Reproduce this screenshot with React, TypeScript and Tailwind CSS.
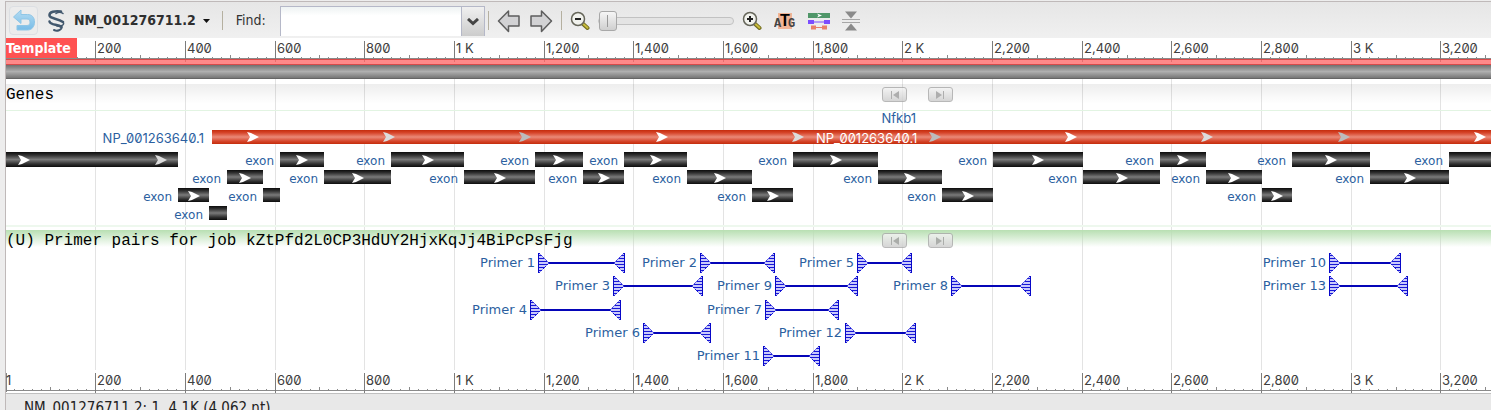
import React from "react";

const ORIGIN = 6;
const SCALE = 0.4484;
const toX = (base: number) => Math.floor(ORIGIN + base * SCALE);

const MAJORS = Array.from({ length: 16 }, (_, i) => (i + 1) * 200);
const TICKS = Array.from({ length: 203 }, (_, i) => (i + 1) * 20);

const EXON_ROWS = [
  { top: 43, height: 15 },
  { top: 61, height: 14 },
  { top: 79, height: 14 },
  { top: 97, height: 14 },
];

const EXONS = [
  { start: 0, end: 178, row: 0 },
  { start: 178, end: 209, row: 2 },
  { start: 209, end: 227, row: 3 },
  { start: 227, end: 263, row: 1 },
  { start: 263, end: 280, row: 2 },
  { start: 280, end: 324, row: 0 },
  { start: 324, end: 391, row: 1 },
  { start: 391, end: 464, row: 0 },
  { start: 464, end: 535, row: 1 },
  { start: 535, end: 583, row: 0 },
  { start: 583, end: 624, row: 1 },
  { start: 624, end: 687, row: 0 },
  { start: 687, end: 752, row: 1 },
  { start: 752, end: 793, row: 2 },
  { start: 793, end: 878, row: 0 },
  { start: 878, end: 942, row: 1 },
  { start: 942, end: 993, row: 2 },
  { start: 993, end: 1083, row: 0 },
  { start: 1083, end: 1160, row: 1 },
  { start: 1160, end: 1206, row: 0 },
  { start: 1206, end: 1262, row: 1 },
  { start: 1262, end: 1292, row: 2 },
  { start: 1292, end: 1370, row: 0 },
  { start: 1370, end: 1449, row: 1 },
  { start: 1449, end: 1828, row: 0 },
];

const PRIMERS = [
  { id: 1, start: 538, end: 625, row: 0 },
  { id: 2, start: 700, end: 775, row: 0 },
  { id: 5, start: 857, end: 912, row: 0 },
  { id: 10, start: 1329, end: 1401, row: 0 },
  { id: 3, start: 613, end: 703, row: 1 },
  { id: 9, start: 775, end: 858, row: 1 },
  { id: 8, start: 951, end: 1031, row: 1 },
  { id: 13, start: 1329, end: 1408, row: 1 },
  { id: 4, start: 530, end: 621, row: 2 },
  { id: 7, start: 765, end: 839, row: 2 },
  { id: 6, start: 643, end: 711, row: 3 },
  { id: 12, start: 845, end: 916, row: 3 },
  { id: 11, start: 763, end: 820, row: 4 },
];

const PRIMER_ROW_Y = [14, 37, 61, 84, 107];

const ARROW_FILLS = ["#ffffff", "#dcdcdc", "#bcbcbc"];

function rulerLabel(base: number) {
  return base % 1000 === 0 ? `${base / 1000} K` : base.toLocaleString("en-US");
}

function Ruler({ first, className }: { first?: boolean; className: string }) {
  return (
    <svg className={className} shapeRendering="crispEdges" role="img" aria-label="Sequence ruler">
      <rect x="0" y="20" width="100%" height="1" fill="#8a8a8a" />
      {TICKS.map((t) => {
        const tall = t % 100 === 0;
        return (
          <rect
            key={t}
            x={toX(t) - 6}
            y={tall ? 17 : 19}
            width="1"
            height={tall ? 4 : 2}
            fill="#8a8a8a"
          />
        );
      })}
      {MAJORS.map((m) => (
        <g key={m}>
          <rect x={toX(m) - 6} y="3" width="1" height="21" fill="#7c7c7c" />
          <text x={toX(m) - 4} y="15" className="fill-[#404040] font-['Inter',sans-serif] text-[13px] slashed-zero">
            {rulerLabel(m)}
          </text>
        </g>
      ))}
      {first && (
        <>
          <rect x="0" y="3" width="1" height="19" fill="#858585" />
          <text x="0" y="15" className="fill-[#404040] font-['Inter',sans-serif] text-[13px]">
            1
          </text>
        </>
      )}
    </svg>
  );
}

function Chevron({ x, y, fill }: { x: number; y: number; fill: string }) {
  return (
    <path
      d={`M${x} ${y - 5}L${x + 4} ${y - 4}L${x + 12} ${y}L${x + 4} ${y + 4}L${x} ${y + 5}L${x + 3} ${y}Z`}
      fill={fill}
    />
  );
}

const LABEL_FONTS = {
  name: "fill-[#2c5f9f] font-['Inter',sans-serif] text-[13px] slashed-zero",
  exon: "fill-[#2c5f9f] font-['DejaVu_Sans',sans-serif] text-[12px]",
  primer: "fill-[#2c5f9f] font-['DejaVu_Sans',sans-serif] text-[13px]",
};

function FeatureLabel({
  x,
  y,
  kind,
  children,
}: {
  x: number;
  y: number;
  kind: keyof typeof LABEL_FONTS;
  children: React.ReactNode;
}) {
  return (
    <text x={x} y={y} textAnchor="end" className={LABEL_FONTS[kind]}>
      {children}
    </text>
  );
}

function GenesTrack() {
  return (
    <svg className="block h-[120px] w-full" role="img" aria-label="Gene features">
      <defs>
        <linearGradient id="exonFill" x1="0" y1="0" x2="0" y2="1">
          <stop offset="0" stopColor="#0c0c0c" />
          <stop offset="0.2" stopColor="#303030" />
          <stop offset="0.5" stopColor="#7a7a7a" />
          <stop offset="0.8" stopColor="#303030" />
          <stop offset="1" stopColor="#0c0c0c" />
        </linearGradient>
        <linearGradient id="cdsFill" x1="0" y1="0" x2="0" y2="1">
          <stop offset="0" stopColor="#c42c0c" />
          <stop offset="0.2" stopColor="#d6452a" />
          <stop offset="0.5" stopColor="#ea8a78" />
          <stop offset="0.8" stopColor="#d6452a" />
          <stop offset="1" stopColor="#c42c0c" />
        </linearGradient>
      </defs>
      <rect x="0" y="0" width="100%" height="1" fill="#e2f4e2" />
      <rect x="0" y="115" width="100%" height="2" fill="#eef8ee" />
      <FeatureLabel kind="name" x={910} y={13}>Nfkb1</FeatureLabel>
      <FeatureLabel kind="name" x={198} y={33}>NP_001263640.1</FeatureLabel>
      <rect x="206" y="20" width="1616" height="14" fill="url(#cdsFill)" />
      {Array.from({ length: 12 }, (_, i) => (
        <Chevron key={i} x={241 + Math.floor(i * 136.4)} y={27} fill={ARROW_FILLS[i % 3]} />
      ))}
      <text x="810" y="33" className="fill-white font-['Inter',sans-serif] text-[13px] slashed-zero">
        NP_001263640.1
      </text>
      {EXONS.map((e) => {
        const { top, height } = EXON_ROWS[e.row];
        const x = e.start === 0 ? 0 : e.start - 6;
        const width = e.end - 6 - x;
        const mid = top + 7;
        const wide = width > 150;
        return (
          <g key={e.start}>
            {e.start > 0 && (
              <FeatureLabel kind="exon" x={x - 6} y={top + 12}>exon</FeatureLabel>
            )}
            <rect x={x} y={top - 1} width={width} height={height} fill="url(#exonFill)" shapeRendering="crispEdges" />
            {wide && e.start === 0 && (
              <>
                <Chevron x={12} y={mid} fill="#ffffff" />
                <Chevron x={149} y={mid} fill="#dcdcdc" />
              </>
            )}
            {!wide && width > 20 && <Chevron x={Math.round(x + width / 2) - 6} y={mid} fill="#ffffff" />}
          </g>
        );
      })}
    </svg>
  );
}

function PrimerEnd({ x, y, dir }: { x: number; y: number; dir: 1 | -1 }) {
  return (
    <g>
      <path d={`M${x} ${y - 10}L${x + dir * 10} ${y}L${x} ${y + 10}Z`} fill="#c9c9fb" />
      <path
        d={[-8, -5, -2, 1, 4, 7]
          .map((o) => `M${x} ${y + o + 0.5}h${dir * (10 - Math.abs(o))}`)
          .join("")}
        stroke="#1616d6"
        strokeWidth="1"
      />
      <path d={`M${x} ${y - 10}L${x + dir * 10} ${y}L${x} ${y + 10}`} fill="none" stroke="#1616d6" strokeWidth="1" strokeDasharray="2 1" />
      <rect x={dir === 1 ? x - 1 : x} y={y - 10} width="1" height="20" fill="#0808c8" />
    </g>
  );
}

function PrimerTrack() {
  return (
    <svg className="block h-[121px] w-full" role="img" aria-label="Primer pairs">
      {PRIMERS.map((p) => {
        const y = PRIMER_ROW_Y[p.row];
        const a = p.start - 5;
        const b = p.end - 7;
        return (
          <g key={p.id}>
            <FeatureLabel kind="primer" x={a - 4} y={y + 4}>{`Primer ${p.id}`}</FeatureLabel>
            <rect x={a + 8} y={y - 1} width={b - a - 16} height="2" fill="#0505b8" />
            <PrimerEnd x={a} y={y} dir={1} />
            <PrimerEnd x={b} y={y} dir={-1} />
          </g>
        );
      })}
    </svg>
  );
}

function StepButton({ label, next }: { label: string; next?: boolean }) {
  return (
    <button
      type="button"
      aria-label={label}
      className="flex h-[15px] w-[25px] items-center justify-center rounded-[3px] border border-[#a8a8a8] bg-linear-to-b from-[#f4f4f4] to-[#cccccc] opacity-80"
    >
      <svg width="11" height="10" viewBox="0 0 11 10" fill="#9c9c9c">
        {next ? <path d="M1 1L7 5L1 9ZM8 1h1v8h-1z" /> : <path d="M10 1L4 5L10 9ZM2 1h1v8h-1z" />}
      </svg>
    </button>
  );
}

function TrackHeader({ title, className }: { title: string; className: string }) {
  return (
    <div className={`flex ${className}`}>
      <h2 className="w-[876px] shrink-0 pt-px font-['Liberation_Mono',monospace] text-[16px] leading-[20px] whitespace-pre text-black">
        {title}
      </h2>
      <div className="flex gap-[21px] pt-[3px]">
        <StepButton label={`Previous in ${title}`} />
        <StepButton label={`Next in ${title}`} next />
      </div>
    </div>
  );
}

function Separator() {
  return <span className="h-[19px] w-px shrink-0 bg-[#b5b0a0]" />;
}

function UndoIcon() {
  return (
    <svg width="24" height="24" viewBox="0 0 24 24">
      <defs>
        <linearGradient id="undoFill" x1="0" y1="0" x2="0" y2="1">
          <stop offset="0" stopColor="#b4dcf2" />
          <stop offset="1" stopColor="#78bce8" />
        </linearGradient>
      </defs>
      <path
        d="M1.500 8L9 1v4.500h6.500c4.500 0 7 3 7 7.500s-2.500 8-7 8H5v-4.500h10c2 0 3-1.300 3-3.300s-1-3.200-3-3.200H9v4.500z"
        fill="url(#undoFill)"
        stroke="#8fc6e6"
        strokeWidth="1"
        strokeLinejoin="round"
      />
    </svg>
  );
}

function HelixIcon() {
  return (
    <svg width="20" height="24" viewBox="0 0 20 24" fill="none" stroke="#42586e" strokeLinecap="round">
      <path d="M9 4.500C11 3 14 3 16 4.500" strokeWidth="1.500" />
      <path d="M14 2.500C8 1.500 2 3 2.500 6.500C3 10 11 9 16 13" strokeWidth="2.500" />
      <path d="M16 13C18 15.500 15 17.500 10 17" strokeWidth="1.500" />
      <path d="M2.500 12.500C3.500 16.500 11 15 14.500 18" strokeWidth="2.500" />
      <path d="M14.500 18C15 21 10 22.500 7 21" strokeWidth="2" />
    </svg>
  );
}

function PanArrow({ right }: { right?: boolean }) {
  return (
    <svg width="24" height="24" viewBox="0 0 24 24">
      <path
        d={right ? "M22.500 12L12.500 2v5H2v10h10.500V22.500z" : "M1.500 12L11.500 2v5H22v10H11.500V22.500z"}
        fill="#d2d2d4"
        stroke="#5e5e5e"
        strokeWidth="1.500"
        strokeLinejoin="round"
      />
    </svg>
  );
}

function MagnifierIcon({ plus }: { plus?: boolean }) {
  return (
    <svg width="20" height="20" viewBox="0 0 20 20">
      <path d="M12 12l5.500 5" stroke="#6f6a1c" strokeWidth="4" strokeLinecap="round" />
      <path d="M12.500 12.300l5 4.500" stroke="#c9bc3c" strokeWidth="2" strokeLinecap="round" />
      <circle cx="8" cy="8" r="6.500" fill="#f2f3ee" stroke="#66665a" strokeWidth="1.500" />
      <path d={plus ? "M5 8h6M8 5v6" : "M5 8h6"} stroke="#222222" strokeWidth="2" />
    </svg>
  );
}

function SequenceIcon() {
  return (
    <svg width="22" height="20" viewBox="0 0 22 20">
      <rect x="4" y="2" width="14" height="16" fill="#f0b497" />
      <text x="0" y="16" className="fill-[#444444] font-['Liberation_Mono',monospace] text-[12px] font-bold">A</text>
      <text x="14" y="16" className="fill-[#444444] font-['Liberation_Mono',monospace] text-[12px] font-bold">G</text>
      <text x="6" y="15" className="fill-black font-['Liberation_Sans',sans-serif] text-[16px] font-bold">T</text>
    </svg>
  );
}

function TracksIcon() {
  return (
    <svg width="22" height="18" viewBox="0 0 22 18">
      <path d="M0 1h22v5H0z" fill="#4f9668" />
      <path d="M9 1.500L14 3.500L9 5.500L10.500 3.500z" fill="#ffffff" />
      <path d="M0 8h6v4H0zM16 8h6v4h-6zM6 9.500h10v1H6z" fill="#7b4dff" />
      <path d="M3 13.500h5v4H3zM14 13.500h5v4h-5zM8 15h6v1H8z" fill="#e8806a" />
    </svg>
  );
}

function CollapseIcon() {
  return (
    <svg width="18" height="20" viewBox="0 0 18 20">
      <path d="M3 0.500h12L9 7.500z" fill="#8a8a8a" />
      <path d="M3 19.500h12L9 12.500z" fill="#8a8a8a" />
      <path d="M0 8.500h18M0 11.500h18" stroke="#a6a6a6" strokeWidth="1" />
    </svg>
  );
}

function Toolbar() {
  return (
    <div className="flex h-[36px] items-center bg-linear-to-b from-[#e6e6e6] to-[#f0f0f0] pt-px pl-[3px] font-['DejaVu_Sans_Condensed','DejaVu_Sans',sans-serif] text-[14px] text-[#333333]">
      <button
        type="button"
        aria-label="Go back"
        className="flex h-[29px] w-[29px] shrink-0 items-center justify-center rounded-[4px] border border-[#dcdfe3] bg-[#ececec]"
      >
        <UndoIcon />
      </button>
      <button type="button" className="ml-[9px] flex shrink-0 items-center">
        <HelixIcon />
        <span className="ml-[7px] font-bold text-[#2f2f2f]">NM_001276711.2</span>
        <svg className="ml-[7px]" width="7" height="4" viewBox="0 0 7 4">
          <path d="M0 0h7L3.500 4z" fill="#111111" />
        </svg>
      </button>
      <div className="ml-[12px] flex items-center gap-[13px]">
        <Separator />
        <label htmlFor="find" className="w-[31px] whitespace-nowrap">
          Find:
        </label>
      </div>
      <div className="mt-[3px] ml-[13px] flex h-[30px] shrink-0 self-start">
        <input
          id="find"
          type="text"
          className="w-[182px] border border-b-0 border-[#b5b8c8] bg-linear-to-b from-[#eef3f3] to-white to-30% px-1 outline-none"
        />
        <button
          type="button"
          aria-label="Show search suggestions"
          className="flex w-[23px] items-center justify-center border-t border-r border-[#b5b8c8] bg-linear-to-b from-[#f0f0f0] to-[#cccccc]"
        >
          <svg width="12" height="8" viewBox="0 0 12 8" fill="none" stroke="#444444" strokeWidth="3">
            <path d="M1 1l5 4.500L11 1" />
          </svg>
        </button>
      </div>
      <div className="ml-[3px] flex shrink-0 items-center gap-[8px]">
        <Separator />
        <div className="flex gap-[8px]">
          <button type="button" aria-label="Pan left"><PanArrow /></button>
          <button type="button" aria-label="Pan right"><PanArrow right /></button>
        </div>
        <Separator />
      </div>
      <button type="button" aria-label="Zoom out" className="mt-px ml-[8px] shrink-0">
        <MagnifierIcon />
      </button>
      <input
        type="range"
        aria-label="Zoom level"
        min={0}
        max={100}
        defaultValue={0}
        className="ml-[8px] h-5 w-[136px] shrink-0 appearance-none bg-transparent [&::-webkit-slider-runnable-track]:h-2 [&::-webkit-slider-runnable-track]:rounded-full [&::-webkit-slider-runnable-track]:border [&::-webkit-slider-runnable-track]:border-[#c2c2c2] [&::-webkit-slider-runnable-track]:bg-[#e4e4e4] [&::-webkit-slider-thumb]:-mt-[7px] [&::-webkit-slider-thumb]:h-5 [&::-webkit-slider-thumb]:w-[18px] [&::-webkit-slider-thumb]:appearance-none [&::-webkit-slider-thumb]:rounded-[3px] [&::-webkit-slider-thumb]:border [&::-webkit-slider-thumb]:border-[#a8a8a8] [&::-webkit-slider-thumb]:bg-[linear-gradient(#999,#999),linear-gradient(#f6f6f6,#cfcfcf)] [&::-webkit-slider-thumb]:bg-[length:1px_12px,100%_100%] [&::-webkit-slider-thumb]:bg-center [&::-webkit-slider-thumb]:bg-no-repeat"
      />
      <div className="ml-[8px] flex shrink-0 items-center gap-[12px]">
        <button type="button" aria-label="Zoom in"><MagnifierIcon plus /></button>
        <button type="button" aria-label="Zoom to sequence"><SequenceIcon /></button>
        <button type="button" aria-label="Configure tracks"><TracksIcon /></button>
        <button type="button" aria-label="Collapse tracks"><CollapseIcon /></button>
      </div>
    </div>
  );
}

export default function App() {
  return (
    <div className="flex h-screen overflow-hidden bg-[#ededed] pt-px pl-[5px]">
      <div className="flex min-w-0 flex-1 flex-col border-t border-l border-[#bfb9b9] [&>*]:shrink-0">
        <Toolbar />
        <main className="bg-white">
          <div className="relative">
            <Ruler className="block h-[21px] w-full overflow-visible" />
            <span className="absolute top-0 left-0 h-[20px] w-[71px] overflow-hidden bg-[#ff5252] font-['DejaVu_Sans_Condensed','DejaVu_Sans',sans-serif] text-[14px] leading-[20px] font-bold text-white">
              Template
            </span>
          </div>
          <div className="relative h-[6px] border-y border-[#d84a4a] bg-[#ff6b6b]/80" />
          <div className="h-[14px] border-b border-[#666666] bg-linear-to-b from-[#707070] via-[#b0b0b0] to-[#777777]" />
          <div className="relative pt-[5px]">
            <svg className="absolute inset-0 h-full w-full" shapeRendering="crispEdges" aria-hidden="true">
              {MAJORS.map((m) => (
                <rect key={m} x={toX(m) - 6} y="0" width="1" height="100%" fill="#e3e3e3" />
              ))}
            </svg>
            <section className="relative">
              <TrackHeader title="Genes" className="h-[26px] bg-linear-to-b from-black/7 to-transparent to-75%" />
              <GenesTrack />
            </section>
            <section className="relative">
              <TrackHeader
                title="(U) Primer pairs for job kZtPfd2L0CP3HdUY2HjxKqJj4BiPcPsFjg"
                className="h-[19px] bg-linear-to-b from-[#b8dfb2] to-transparent to-90%"
              />
              <PrimerTrack />
            </section>
          </div>
          <Ruler first className="block h-[23px] w-full bg-white" />
        </main>
        <footer className="h-[30px] border-t border-[#bfbfbf] bg-[#e8e8e8] pt-[5px] pl-[18px] font-['DejaVu_Sans_Condensed','DejaVu_Sans',sans-serif] text-[15px] leading-[18px] text-[#222222]">
          NM_001276711.2: 1..4.1K (4,062 nt)
        </footer>
      </div>
    </div>
  );
}
